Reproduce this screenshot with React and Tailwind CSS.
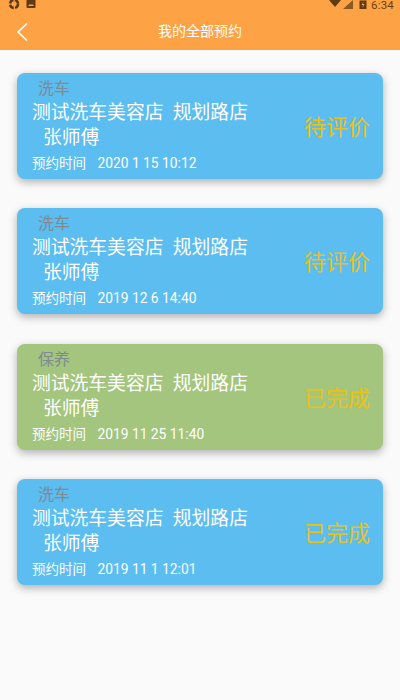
import React from "react";

const font = { fontFamily: '"Roboto", "Noto Sans CJK SC", sans-serif' };

const items = [
  { type: "洗车", time: "2020 1 15 10:12", status: "待评价", bg: "bg-[#5bbdf0]" },
  { type: "洗车", time: "2019 12 6 14:40", status: "待评价", bg: "bg-[#5bbdf0]" },
  { type: "保养", time: "2019 11 25 11:40", status: "已完成", bg: "bg-[#a3c57d]" },
  { type: "洗车", time: "2019 11 1 12:01", status: "已完成", bg: "bg-[#5bbdf0]" },
];

function Card({ item }) {
  return (
    <div className={`${item.bg} h-[106px] rounded-lg shadow-[0_3px_8px_rgba(0,0,0,0.3)] pl-[15px] pr-[13px] flex items-center justify-between`}>
      <div className="flex flex-col h-full">
        <div className="pl-[6px] h-[23px] mt-[5px] text-[16px] leading-[21px] text-[#7f8a92]">{item.type}</div>
        <div className="text-[18.8px] leading-[25px] text-white whitespace-pre">测试洗车美容店  规划路店</div>
        <div className="pl-[11px] text-[18.8px] leading-[25px] text-white">张师傅</div>
        <div className="mt-[2px] flex items-center gap-[11.5px] text-[13.5px] leading-[20px] text-white whitespace-pre">
          <span>预约时间</span>
          <span className="text-[13.8px]">{item.time}</span>
        </div>
      </div>
      <div className="text-[22px] leading-[28px] mt-[4px] text-[#e9c117]">{item.status}</div>
    </div>
  );
}

export default function App() {
  return (
    <div style={font} className="w-[400px] h-[700px] bg-[#fafafa] flex flex-col overflow-hidden">
      <div className="bg-[#fda345] h-[50px] shrink-0 flex flex-col">
        <div className="h-[12px] flex justify-between pl-[8px] pr-[6px]">
          <div className="flex items-start gap-[6px] -mt-[1px]">
            <svg width="12" height="11" viewBox="0 0 12 11">
              <circle cx="6" cy="5" r="4" fill="none" stroke="#5f3a12" strokeWidth="2.5" strokeDasharray="5 1.4" />
            </svg>
            <svg width="10" height="9" viewBox="0 0 10 9">
              <rect x="0.5" y="0" width="9" height="9" rx="1" fill="#5f3a12" />
              <path d="M2 7l2-2 1 1 1-1 2 2z" fill="#fda345" />
            </svg>
          </div>
          <div className="flex items-start text-[#6b3f12]">
            <svg width="14" height="8" viewBox="0 0 14 8">
              <path d="M1 0h12L7 7z" fill="#5f3a12" />
            </svg>
            <svg width="10" height="9" viewBox="0 0 10 9" className="ml-[1px]">
              <path d="M0 9L10 0v9z" fill="#8a5a22" />
            </svg>
            <svg width="8" height="9" viewBox="0 0 8 9" className="ml-[6px]">
              <rect x="0.5" y="0.5" width="7" height="8.5" fill="#5f3a12" />
              <path d="M4.5 1.5L2.5 5h1.5l-.5 3 2-4H4z" fill="#fda345" />
            </svg>
            <span className="ml-[4px] text-[11.5px] leading-[10px] tracking-[0.2px]">6:34</span>
          </div>
        </div>
        <div className="relative flex-1 flex items-center justify-center -mt-[1px]">
          <svg width="14" height="20" viewBox="0 0 14 20" className="absolute left-[15px] top-[11px]">
            <path d="M12 1.5L3 10l9 8.5" fill="none" stroke="#fff" strokeWidth="1.6" />
          </svg>
          <span className="text-white text-[14px] pt-[1px]">我的全部预约</span>
        </div>
      </div>
      <div className="flex flex-col gap-[29.4px] pt-[23px] pl-[17px] pr-[17px]">
        {items.map((item, i) => (
          <Card key={i} item={item} />
        ))}
      </div>
    </div>
  );
}
